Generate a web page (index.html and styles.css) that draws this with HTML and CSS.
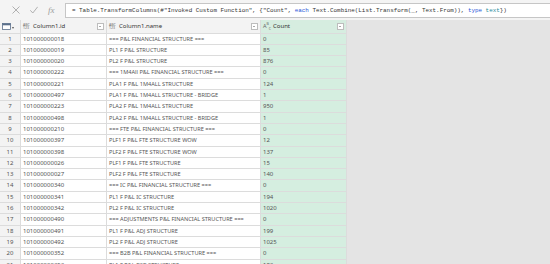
FILE: index.html
```html
<!DOCTYPE html>
<html lang="en">
<head>
    <meta charset="UTF-8">
    <title>Power Query Editor</title>
    <link rel="stylesheet" href="styles.css">
</head>
<body>

    <div class="formula-bar">
        <div class="formula-icons">
            <svg width="8" height="8" viewBox="0 0 8 8"><path d="M0.5 0.5 L7.5 7.5 M7.5 0.5 L0.5 7.5" stroke="#a8a8a8" stroke-width="0.9" fill="none"/></svg>
            <svg width="8" height="8" viewBox="0 0 8 8"><path d="M0.3 4.3 L2.8 7 L7.7 0.8" stroke="#a8a8a8" stroke-width="0.9" fill="none"/></svg>
            <span class="fx">fx</span>
        </div>
        <div class="formula-input">
            = Table.TransformColumns(#"Invoked Custom Function", {"Count", <span class="kw">each</span> Text.Combine(List.Transform(_, Text.From)), <span class="kw">type</span> <span class="ty">text</span>})
        </div>
    </div>

    <div class="workspace">
        <div class="grid" id="grid">
            <div class="hd corner">
                <svg width="9" height="7" viewBox="0 0 9 7"><rect x="0.5" y="0.5" width="8" height="6" fill="#fff" stroke="#5a6f8a" stroke-width="0.8"/><rect x="0.5" y="0.5" width="8" height="1.8" fill="#5a6f8a"/></svg>
                <span class="tri"></span>
            </div>
            <div class="hd">
                <span class="type-icon"><span>ABC</span><span>123</span></span>
                <span class="hd-name">Column1.id</span>
                <span class="dd"></span>
            </div>
            <div class="hd">
                <span class="type-icon"><span>ABC</span><span>123</span></span>
                <span class="hd-name">Column1.name</span>
                <span class="dd"></span>
            </div>
            <div class="hd hd-count">
                <span class="type-text">A<sup>B</sup><sub>C</sub></span>
                <span class="hd-name">Count</span>
                <span class="dd"></span>
            </div>
        </div>
    </div>

    <script>
        var rows = [
            ['101000000018', '=== P&L FINANCIAL STRUCTURE ===', '0'],
            ['101000000019', 'PL1 F P&L STRUCTURE', '85'],
            ['101000000020', 'PL2 F P&L STRUCTURE', '876'],
            ['101000000222', '=== 1M4All P&L FINANCIAL STRUCTURE ===', '0'],
            ['101000000221', 'PLA1 F P&L 1M4ALL STRUCTURE', '124'],
            ['101000000497', 'PLA1 F P&L 1M4ALL STRUCTURE - BRIDGE', '1'],
            ['101000000223', 'PLA2 F P&L 1M4ALL STRUCTURE', '950'],
            ['101000000498', 'PLA2 F P&L 1M4ALL STRUCTURE - BRIDGE', '1'],
            ['101000000210', '=== FTE P&L FINANCIAL STRUCTURE ===', '0'],
            ['101000000397', 'PLF1 F P&L FTE STRUCTURE WOW', '12'],
            ['101000000398', 'PLF2 F P&L FTE STRUCTURE WOW', '137'],
            ['101000000026', 'PLF1 F P&L FTE STRUCTURE', '15'],
            ['101000000027', 'PLF2 F P&L FTE STRUCTURE', '140'],
            ['101000000340', '=== IC P&L FINANCIAL STRUCTURE ===', '0'],
            ['101000000341', 'PL1 F P&L IC STRUCTURE', '194'],
            ['101000000342', 'PL2 F P&L IC STRUCTURE', '1020'],
            ['101000000490', '=== ADJUSTMENTS P&L FINANCIAL STRUCTURE ===', '0'],
            ['101000000491', 'PL1 F P&L ADJ STRUCTURE', '199'],
            ['101000000492', 'PL2 F P&L ADJ STRUCTURE', '1025'],
            ['101000000352', '=== B2B P&L FINANCIAL STRUCTURE ===', '0'],
            ['101000000353', 'PL1 F P&L B2B STRUCTURE', '183']
        ];

        var grid = document.getElementById('grid');
        rows.forEach(function (r, i) {
            var cells = [
                ['num', String(i + 1)],
                ['cell', r[0]],
                ['cell name', r[1]],
                ['cell count', r[2]]
            ];
            cells.forEach(function (c) {
                var d = document.createElement('div');
                d.className = c[0];
                d.textContent = c[1];
                grid.appendChild(d);
            });
        });
    </script>

</body>
</html>
```

FILE: styles.css
```css
body {
    margin: 0;
    background-color: #e4e4e4;
    font-family: "Noto Sans", "Liberation Sans", sans-serif;
    width: 550px;
    height: 264px;
    overflow: hidden;
}
.formula-bar {
    display: flex;
    align-items: center;
    height: 20px;
    background-color: #f4f4f4;
}
.formula-icons {
    display: flex;
    align-items: center;
    gap: 10px;
    width: 53px;
    padding-left: 12px;
}
.fx {
    font-family: "Liberation Serif", serif;
    font-style: italic;
    font-size: 9px;
    color: #9c9c9c;
}
.formula-input {
    flex: 1;
    height: 13px;
    line-height: 13px;
    background-color: #ffffff;
    border: 1px solid #c6c6c6;
    border-right: none;
    padding-left: 6px;
    font-family: "Liberation Mono", monospace;
    font-size: 5.9px;
    color: #333;
    white-space: nowrap;
    overflow: hidden;
}
.kw {
    color: #2a55d8;
}
.ty {
    color: #1e8a9a;
}
.grid {
    display: grid;
    grid-template-columns: 20px 85px 153px 85px;
    grid-template-rows: 12.6px;
    grid-auto-rows: 10.3px;
    gap: 1px;
    width: 346px;
    background-color: #dcdcdc;
    border-right: 1px solid #dcdcdc;
}
.hd {
    display: flex;
    align-items: center;
    background-color: #f3f3f3;
    font-size: 6px;
    color: #333;
    padding-left: 2px;
    gap: 2px;
}
.corner {
    gap: 1px;
}
.tri {
    width: 0;
    height: 0;
    border-left: 1.5px solid transparent;
    border-right: 1.5px solid transparent;
    border-top: 2px solid #555;
    margin-top: 3px;
}
.type-icon {
    display: flex;
    flex-direction: column;
    font-size: 3.5px;
    line-height: 3.6px;
    color: #666;
    width: 8px;
}
.type-text {
    font-size: 5.5px;
    line-height: 6px;
    color: #666;
    width: 8px;
}
.type-text sup, .type-text sub {
    font-size: 3.5px;
}
.hd-name {
    flex: 1;
    white-space: nowrap;
    color: #333;
}
.dd {
    width: 5px;
    height: 5px;
    margin-right: 2px;
    border: 1px solid #bdbdbd;
    background-color: #fff;
    position: relative;
}
.dd::after {
    content: "";
    position: absolute;
    left: 1px;
    top: 2px;
    border-left: 1.5px solid transparent;
    border-right: 1.5px solid transparent;
    border-top: 1.5px solid #555;
}
.hd-count {
    background-color: #d6ede0;
}
.num {
    background-color: #f3f3f3;
    color: #555;
    font-size: 6px;
    text-align: center;
    line-height: 10.3px;
}
.cell {
    background-color: #ffffff;
    color: #555;
    font-size: 6px;
    line-height: 10.3px;
    padding-left: 2px;
    white-space: nowrap;
    overflow: hidden;
}
.cell.name {
    font-size: 5.6px;
}
.cell.count {
    background-color: #d5eee0;
}
```
